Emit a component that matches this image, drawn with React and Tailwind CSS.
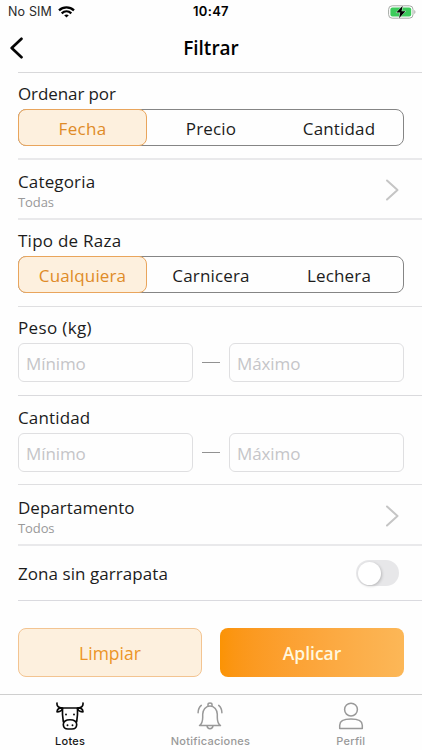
const label = "block whitespace-nowrap text-[17px] leading-6 text-[#1c1c1c]";

function Segmented({ items }) {
  return (
    <div className="flex h-[37px] w-[386px] rounded-lg border border-[#858585]">
      {items.map(([text, tracking], i) => (
        <div
          key={text}
          className={
            i === 0
              ? "-my-px -ml-px flex w-[129px] items-center justify-center rounded-lg border border-[#e9a55c] bg-[#fdf0de] pt-[2px] text-[17px] text-[#df8b27]"
              : "flex flex-1 items-center justify-center pt-[2px] text-[17px] text-[#1c1c1c]"
          }
        >
          <span className={tracking}>{text}</span>
        </div>
      ))}
    </div>
  );
}

function Range({ title, tracking, className }) {
  const field =
    "h-[39px] w-[175px] rounded-md border border-[#dfdfe1] bg-transparent px-[7px] pt-[2px] text-[17px] text-black outline-none placeholder:text-[#c5c5c8]";
  return (
    <section className={className}>
      <span className={`${label} ${tracking}`}>{title}</span>
      <div className="mt-[3px] flex w-[386px] items-center justify-between">
        <input className={`${field} tracking-[-0.1px]`} placeholder="Mínimo" />
        <span className="h-px w-[18px] bg-[#929292]" />
        <input className={`${field} tracking-[-0.1px]`} placeholder="Máximo" />
      </div>
    </section>
  );
}

function LinkRow({ title, value, tracking, className }) {
  return (
    <section className={className}>
      <div>
        <span className={`${label} ${tracking}`}>{title}</span>
        <span className="-mt-px block text-[13px] leading-[18px] tracking-[-0.1px] text-[#999]">{value}</span>
      </div>
      <svg className="mt-[9px] mr-[23px] h-[22px] w-[14px]" viewBox="0 0 14 22" fill="none" stroke="#c5c5c5" strokeWidth="2" strokeLinecap="round" strokeLinejoin="round">
        <path d="M2 1.5 12.5 11 2 20.5" />
      </svg>
    </section>
  );
}

function Cow() {
  return (
    <svg className="h-7 w-7" viewBox="0 0 28 28" fill="none" stroke="#080808" strokeWidth="1.65" strokeLinecap="round" strokeLinejoin="round">
      <path d="M1 1C.6 4.200 2.600 6 6 6h16c3.400 0 5.400-1.800 5-5M6.500 6v6.500l.8 7.200M21.500 6v6.500l-.8 7.200" />
      <path d="M6.500 6C3.500 5.700 1.300 7.200 1 9.800c2.500.2 4.700-.7 5.500-3.200M21.500 6c3-.3 5.200 1.200 5.500 3.800-2.500.2-4.700-.7-5.500-3.200" />
      <path d="M14 17.700c-4 0-6.900 1.700-6.700 5 .2 3 2.200 4.300 4.700 4.300h4c2.500 0 4.500-1.300 4.700-4.300.2-3.300-2.700-5-6.700-5Z" />
      <path d="M10 12.500h.01M18 12.500h.01M11.500 23.200h.01M16.500 23.200h.01" strokeWidth="1.900" />
    </svg>
  );
}

function Bell() {
  return (
    <svg className="h-7 w-7" viewBox="0 0 28 28" fill="none" stroke="#999" strokeWidth="1.500" strokeLinecap="round" strokeLinejoin="round">
      <path d="M3.500 23.500c2.300-1.600 3.200-4.300 3.200-8v-3.200c0-4.700 3.100-8.300 7.300-8.300s7.300 3.600 7.300 8.300v3.200c0 3.700.9 6.400 3.200 8Z" />
      <path d="M12 4V2.600c0-2.100 4-2.100 4 0V4M11 23.700c.5 4.200 5.500 4.200 6 0M5.300 3.400C3.200 5.200 2.100 7.700 2.100 10.800M22.700 3.400c2.100 1.800 3.200 4.300 3.200 7.400" />
    </svg>
  );
}

function Person() {
  return (
    <svg className="h-7 w-7" viewBox="0 0 28 28" fill="none" stroke="#999" strokeWidth="1.500" strokeLinejoin="round">
      <circle cx="14" cy="7.600" r="6.400" />
      <path d="M2.700 26.500v-3.300c0-4.300 4.300-6.100 11.300-6.100s11.300 1.800 11.300 6.100v3.300Z" />
    </svg>
  );
}

function Tab({ icon, text, className }) {
  return (
    <div className={`flex flex-1 flex-col items-center ${className}`}>
      {icon}
      <span className="mt-[3px] font-['Inter','Liberation_Sans',sans-serif] text-[11px] leading-4 font-medium tracking-[0.25px]">{text}</span>
    </div>
  );
}

export default function App() {
  return (
    <div className="flex h-[750px] w-[422px] flex-col overflow-hidden bg-[#fefefe] font-['Open_Sans','Noto_Sans',sans-serif]">
      <div className="grid h-6 grid-cols-3 items-center px-2 font-['Inter','Liberation_Sans',sans-serif] text-black">
        <div className="flex items-center gap-[6px]">
          <span className="text-[12.5px] tracking-[0.15px] text-[#2a2a2a]">No SIM</span>
          <svg className="h-3 w-[17px]" viewBox="0 0 17 12" fill="none" stroke="#000" strokeWidth="2.300">
            <path d="M1 4.400c4.300-4 10.700-4 15 0M3.700 7.300c2.800-2.500 6.800-2.500 9.600 0" />
            <path d="M8.500 11.500 6.200 9.200c1.300-1.100 3.300-1.100 4.600 0Z" fill="#000" stroke="none" />
          </svg>
        </div>
        <span className="text-center text-[13px] font-semibold tracking-[0.3px]">10:47</span>
        <svg className="-mr-[2px] h-[14px] w-[28px] justify-self-end" viewBox="0 0 28 14">
          <rect x=".6" y=".8" width="24.400" height="12.400" rx="3.600" fill="#fff" stroke="#a5aaa5" />
          <rect x="2.400" y="2.600" width="20.800" height="8.800" rx="2" fill="#3ccb5b" />
          <path d="M26.300 5v4c1.500-.6 1.500-3.400 0-4Z" fill="#a5aaa5" />
          <path d="M14.700.8 8.300 7.600h4L11 13.200l6.500-6.900h-4Z" fill="#000" stroke="#fff" strokeWidth=".8" paintOrder="stroke" />
        </svg>
      </div>

      <header className="grid h-12 grid-cols-3 items-center">
        <svg className="ml-[9px] h-[22px] w-4" viewBox="0 0 16 22" fill="none" stroke="#050505" strokeWidth="2.700" strokeLinecap="round" strokeLinejoin="round">
          <path d="M12.500 1.800 2.700 11l9.800 9.200" />
        </svg>
        <h1 className="-mt-px text-center text-[19px] leading-7 font-semibold text-black">Filtrar</h1>
      </header>

      <main className="ml-[18px]">
        <section className="h-[86px] border-t border-[#d8d8da] pt-[9px]">
          <span className={`${label} tracking-[-0.1px]`}>Ordenar por</span>
          <div className="mt-[3px]">
            <Segmented items={[["Fecha", "tracking-[0.3px]"], ["Precio", "tracking-[0.2px]"], ["Cantidad", "tracking-[0.15px]"]]} />
          </div>
        </section>
        <LinkRow title="Categoria" value="Todas" tracking="tracking-[0.15px]" className="flex h-[60px] items-start justify-between border-t-2 border-[#e9e9eb] pt-[10px]" />
        <section className="h-[88px] border-t-2 border-[#e9e9eb] pt-[9px]">
          <span className={`${label} tracking-[0.25px]`}>Tipo de Raza</span>
          <div className="mt-[3px]">
            <Segmented items={[["Cualquiera", "tracking-[0.15px]"], ["Carnicera", "tracking-[0.15px]"], ["Lechera", "tracking-[0.15px]"]]} />
          </div>
        </section>
        <Range title="Peso (kg)" tracking="tracking-[0.35px]" className="h-[89px] border-t border-[#dfdfe1] pt-[9px]" />
        <Range title="Cantidad" tracking="tracking-[0.15px]" className="h-[89px] border-t border-[#dadadd] pt-[10px]" />
        <LinkRow title="Departamento" value="Todos" tracking="tracking-[0.03px]" className="flex h-[60px] items-start justify-between border-t border-[#dfdfe1] pt-[11px]" />
        <section className="flex h-[56px] items-center justify-between border-t-2 border-[#e9e9eb]">
          <span className={`${label} pt-[2px] tracking-[0.06px]`}>Zona sin garrapata</span>
          <button role="switch" aria-checked="false" aria-label="Zona sin garrapata" className="mr-[23px] flex h-[26px] w-[43px] items-center rounded-full bg-[#e7e7e9] px-[2px]">
            <span className="size-[23px] rounded-full bg-white shadow-[1px_1px_3px_#0003]" />
          </button>
        </section>
        <section className="flex h-[94px] w-[404px] gap-[18px] border-t border-[#dadadf] pt-[27px]">
          <button className="h-[49px] w-[184px] rounded-lg border border-[#f3c491] bg-[#fdf0de] pt-[2px] text-[17.5px] font-medium text-[#ec9527]">Limpiar</button>
          <button className="h-[49px] w-[184px] rounded-lg bg-linear-to-r from-[#fb9304] to-[#fcb757] pt-[2px] text-[17.5px] font-semibold text-[#fff8df]">Aplicar</button>
        </section>
      </main>

      <nav className="flex h-14 border-t border-[#cfcfcf] pt-[7px] pr-px">
        <Tab icon={<Cow />} text="Lotes" className="text-[#171717]" />
        <Tab icon={<Bell />} text="Notificaciones" className="text-[#999]" />
        <Tab icon={<Person />} text="Perfil" className="text-[#999]" />
      </nav>
    </div>
  );
}
